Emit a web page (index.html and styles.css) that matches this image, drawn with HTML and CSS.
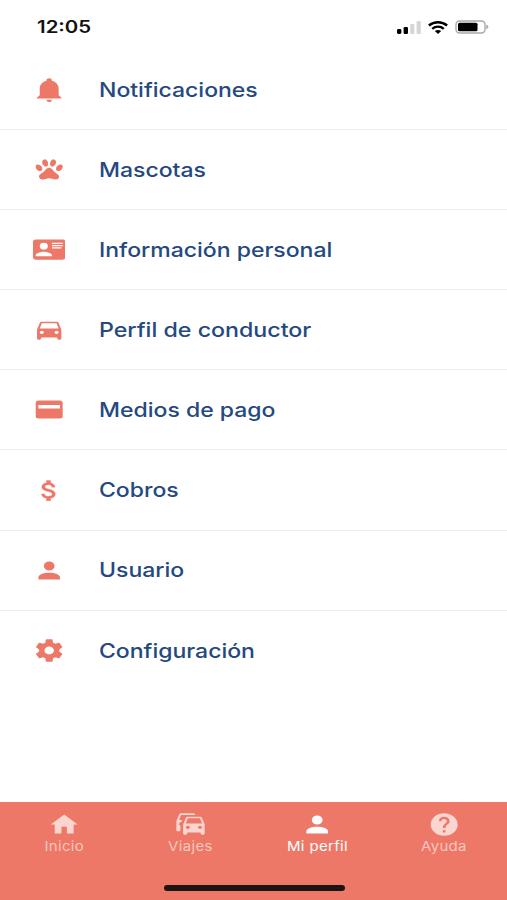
FILE: index.html
```
<!DOCTYPE html>
<html lang="es">
<head>
    <meta charset="UTF-8">
    <meta name="viewport" content="width=device-width, initial-scale=1.0">
    <title>Mi perfil</title>
    <link rel="stylesheet" href="styles.css">
</head>
<body>
    <header class="status-bar">
        <span class="time">12:05</span>
        <div class="status-icons">
            <svg class="signal" viewBox="0 0 24 13" preserveAspectRatio="none">
                <rect x="0" y="8" width="4.4" height="5" rx="1.4"/>
                <rect x="6.6" y="6" width="4.4" height="7" rx="1.2"/>
                <rect class="off" x="13.2" y="3" width="4.2" height="10" rx="1"/>
                <rect class="off" x="19.6" y="0" width="4.2" height="13" rx="1"/>
            </svg>
            <svg class="wifi" viewBox="0 0 20 13" fill="none" stroke="#000" stroke-width="2.4">
                <path d="M.9 4.5C6 .1 14 .1 19.1 4.5"/>
                <path d="M4.2 7.8C7.6 4.9 12.4 4.9 15.8 7.8"/>
                <path d="M6.8 10.1C8.7 8.5 11.3 8.5 13.2 10.1L10 13Z" fill="#000" stroke="none"/>
            </svg>
            <svg class="battery" viewBox="0 0 34 14">
                <rect x="1" y="1" width="29" height="12" rx="3.5" fill="none" stroke="#a9a9a9" stroke-width="1.4"/>
                <rect x="3" y="2.8" width="19.5" height="8.4" rx="1.5"/>
                <path d="M31.3 4.8C34 5.2 34 8.8 31.3 9.2Z" fill="#a9a9a9"/>
            </svg>
        </div>
    </header>

    <main class="menu">
        <a class="menu-item">
            <svg class="icon" viewBox="0 0 24 24" preserveAspectRatio="none"><path d="M21,19V20H3V19L5,17V11C5,7.9 7.03,5.17 10,4.29C10,4.19 10,4.1 10,4A2,2 0 0,1 12,2A2,2 0 0,1 14,4C14,4.1 14,4.19 14,4.29C16.97,5.17 19,7.9 19,11V17L21,19M14,21A2,2 0 0,1 12,23A2,2 0 0,1 10,21"/></svg>
            <span class="label">Notificaciones</span>
        </a>
        <a class="menu-item">
            <svg class="icon" viewBox="0 0 24 24" preserveAspectRatio="none"><path d="M8.35,3C9.53,2.83 10.78,4.12 11.14,5.9C11.5,7.67 10.85,9.25 9.67,9.43C8.5,9.61 7.24,8.32 6.87,6.54C6.5,4.77 7.17,3.19 8.35,3M15.5,3C16.69,3.19 17.35,4.77 17,6.54C16.62,8.32 15.37,9.61 14.19,9.43C13,9.25 12.35,7.67 12.72,5.9C13.08,4.12 14.33,2.83 15.5,3M3,7.6C4.14,7.11 5.69,8 6.5,9.55C7.26,11.13 7,12.79 5.87,13.28C4.74,13.77 3.2,12.89 2.41,11.32C1.62,9.75 1.9,8.08 3,7.6M21,7.6C22.1,8.08 22.38,9.75 21.59,11.32C20.8,12.89 19.26,13.77 18.13,13.28C17,12.79 16.74,11.13 17.5,9.55C18.31,8 19.86,7.11 21,7.6M19.33,18.38C19.37,19.32 18.65,20.36 17.79,20.75C16,21.57 13.88,19.87 11.89,19.87C9.9,19.87 7.76,21.64 6,20.75C5,20.26 4.31,18.96 4.44,17.88C4.62,16.39 6.41,15.59 7.47,14.5C8.88,13.09 9.88,10.44 11.89,10.44C13.89,10.44 14.95,13.05 16.3,14.5C17.41,15.72 19.26,16.75 19.33,18.38Z"/></svg>
            <span class="label">Mascotas</span>
        </a>
        <a class="menu-item">
            <svg class="icon" viewBox="0 0 24 24" preserveAspectRatio="none"><path d="M2,3H22C23.05,3 24,3.95 24,5V19C24,20.05 23.05,21 22,21H2C0.95,21 0,20.05 0,19V5C0,3.95 0.95,3 2,3M14,6V7H22V6H14M14,8V9H22V8H14M14,10V11H21V10H14M8,13.91C6,13.91 2,15 2,17V18H14V17C14,15 10,13.91 8,13.91M8,6A3,3 0 0,0 5,9A3,3 0 0,0 8,12A3,3 0 0,0 11,9A3,3 0 0,0 8,6Z"/></svg>
            <span class="label">Información personal</span>
        </a>
        <a class="menu-item">
            <svg class="icon" viewBox="0 0 24 24" preserveAspectRatio="none"><path d="M5,11L6.5,6.5H17.5L19,11M17.5,16A1.5,1.5 0 0,1 16,14.5A1.5,1.5 0 0,1 17.5,13A1.5,1.5 0 0,1 19,14.5A1.5,1.5 0 0,1 17.5,16M6.5,16A1.5,1.5 0 0,1 5,14.5A1.5,1.5 0 0,1 6.5,13A1.5,1.5 0 0,1 8,14.5A1.5,1.5 0 0,1 6.5,16M18.92,6C18.72,5.42 18.16,5 17.5,5H6.5C5.84,5 5.28,5.42 5.08,6L3,12V20A1,1 0 0,0 4,21H5A1,1 0 0,0 6,20V19H18V20A1,1 0 0,0 19,21H20A1,1 0 0,0 21,20V12L18.92,6Z"/></svg>
            <span class="label wide">Perfil de conductor</span>
        </a>
        <a class="menu-item">
            <svg class="icon" viewBox="0 0 24 24" preserveAspectRatio="none"><path d="M20,11H4V8H20M20,4H4C2.89,4 2,4.89 2,6V18A2,2 0 0,0 4,20H20A2,2 0 0,0 22,18V6C22,4.89 21.1,4 20,4Z"/></svg>
            <span class="label">Medios de pago</span>
        </a>
        <a class="menu-item">
            <svg class="icon dollar" viewBox="0 0 24 24" preserveAspectRatio="none"><path d="M11.8,10.9C9.53,10.31 8.8,9.7 8.8,8.75C8.8,7.66 9.81,6.9 11.5,6.9C13.28,6.9 13.94,7.75 14,9H16.21C16.14,7.28 15.09,5.7 13,5.19V3H10V5.16C8.06,5.58 6.5,6.84 6.5,8.77C6.5,11.08 8.41,12.23 11.2,12.9C13.7,13.5 14.2,14.38 14.2,15.31C14.2,16 13.71,17.1 11.5,17.1C9.44,17.1 8.63,16.18 8.5,15H6.32C6.44,17.19 8.08,18.42 10,18.83V21H13V18.85C14.95,18.5 16.5,17.35 16.5,15.3C16.5,12.46 14.07,11.5 11.8,10.9Z"/></svg>
            <span class="label">Cobros</span>
        </a>
        <a class="menu-item">
            <svg class="icon" viewBox="0 0 24 24" preserveAspectRatio="none"><path d="M12,4A4,4 0 0,1 16,8A4,4 0 0,1 12,12A4,4 0 0,1 8,8A4,4 0 0,1 12,4M12,14C16.42,14 20,15.79 20,18V20H4V18C4,15.79 7.58,14 12,14Z"/></svg>
            <span class="label">Usuario</span>
        </a>
        <a class="menu-item">
            <svg class="icon" viewBox="0 0 24 24" preserveAspectRatio="none"><path d="M12,15.5A3.5,3.5 0 0,1 8.5,12A3.5,3.5 0 0,1 12,8.5A3.5,3.5 0 0,1 15.5,12A3.5,3.5 0 0,1 12,15.5M19.43,12.97C19.47,12.65 19.5,12.33 19.5,12C19.5,11.67 19.47,11.34 19.43,11L21.54,9.37C21.73,9.22 21.78,8.95 21.66,8.73L19.66,5.27C19.54,5.05 19.27,4.96 19.05,5.05L16.56,6.05C16.04,5.66 15.5,5.32 14.87,5.07L14.5,2.42C14.46,2.18 14.25,2 14,2H10C9.75,2 9.54,2.18 9.5,2.42L9.13,5.07C8.5,5.32 7.96,5.66 7.44,6.05L4.95,5.05C4.73,4.96 4.46,5.05 4.34,5.27L2.34,8.73C2.21,8.95 2.27,9.22 2.46,9.37L4.57,11C4.53,11.34 4.5,11.67 4.5,12C4.5,12.33 4.53,12.65 4.57,12.97L2.46,14.63C2.27,14.78 2.21,15.05 2.34,15.27L4.34,18.73C4.46,18.95 4.73,19.03 4.95,18.95L7.44,17.94C7.96,18.34 8.5,18.68 9.13,18.93L9.5,21.58C9.54,21.82 9.75,22 10,22H14C14.25,22 14.46,21.82 14.5,21.58L14.87,18.93C15.5,18.67 16.04,18.34 16.56,17.94L19.05,18.95C19.27,19.03 19.54,18.95 19.66,18.73L21.66,15.27C21.78,15.05 21.73,14.78 21.54,14.63L19.43,12.97Z"/></svg>
            <span class="label">Configuración</span>
        </a>
    </main>

    <nav class="tab-bar">
        <div class="tabs">
            <a class="tab">
                <svg class="icon" viewBox="0 0 24 24" preserveAspectRatio="none"><path d="M10,20V14H14V20H19V12H22L12,3L2,12H5V20H10Z"/></svg>
                <span class="tab-label">Inicio</span>
            </a>
            <a class="tab">
                <svg class="icon" viewBox="0 0 24 24" preserveAspectRatio="none"><path d="M8,11L9.5,6.5H18.5L20,11M18.5,16A1.5,1.5 0 0,1 17,14.5A1.5,1.5 0 0,1 18.5,13A1.5,1.5 0 0,1 20,14.5A1.5,1.5 0 0,1 18.5,16M9.5,16A1.5,1.5 0 0,1 8,14.5A1.5,1.5 0 0,1 9.5,13A1.5,1.5 0 0,1 11,14.5A1.5,1.5 0 0,1 9.5,16M19.92,6C19.71,5.4 19.14,5 18.5,5H9.5C8.86,5 8.29,5.4 8.08,6L6,12V20A1,1 0 0,0 7,21H8A1,1 0 0,0 9,20V19H19V20A1,1 0 0,0 20,21H21A1,1 0 0,0 22,20V12L19.92,6M14.92,3C14.71,2.4 14.14,2 13.5,2H4.5C3.86,2 3.29,2.4 3.08,3L1,9V17A1,1 0 0,0 2,18H3A1,1 0 0,0 4,17V12.91C3.22,12.63 2.82,11.77 3.1,11C3.32,10.4 3.87,10 4.5,10H4.57L5.27,8H3L4.5,3.5H15.09L14.92,3Z"/></svg>
                <span class="tab-label">Viajes</span>
            </a>
            <a class="tab active">
                <svg class="icon" viewBox="0 0 24 24" preserveAspectRatio="none"><path d="M12,4A4,4 0 0,1 16,8A4,4 0 0,1 12,12A4,4 0 0,1 8,8A4,4 0 0,1 12,4M12,14C16.42,14 20,15.79 20,18V20H4V18C4,15.79 7.58,14 12,14Z"/></svg>
                <span class="tab-label">Mi perfil</span>
            </a>
            <a class="tab">
                <svg class="icon" viewBox="0 0 24 24" preserveAspectRatio="none"><path d="M15.07,11.25L14.17,12.17C13.45,12.89 13,13.5 13,15H11V14.5C11,13.39 11.45,12.39 12.17,11.67L13.41,10.41C13.78,10.05 14,9.55 14,9C14,7.89 13.1,7 12,7A2,2 0 0,0 10,9H8A4,4 0 0,1 12,5A4,4 0 0,1 16,9C16,9.88 15.64,10.67 15.07,11.25M13,19H11V17H13M12,2A10,10 0 0,0 2,12A10,10 0 0,0 12,22A10,10 0 0,0 22,12C22,6.47 17.5,2 12,2Z"/></svg>
                <span class="tab-label">Ayuda</span>
            </a>
        </div>
        <div class="home-indicator"></div>
    </nav>
</body>
</html>
```
FILE: styles.css
```
* {
    margin: 0;
    padding: 0;
    box-sizing: border-box;
}

body {
    height: 100vh;
    display: flex;
    flex-direction: column;
    overflow: hidden;
    background-color: #fff;
    font-family: Inter, "Liberation Sans", sans-serif;
}

.status-bar {
    height: 50px;
    padding: 4px 18px 0 37px;
    display: flex;
    justify-content: space-between;
    align-items: center;
}

.time {
    font-size: 17px;
    font-weight: 600;
    color: #111;
    transform: scaleX(1.2);
    transform-origin: left;
}

.status-icons {
    display: flex;
    align-items: center;
    gap: 7px;
}

.signal {
    width: 24px;
    height: 13px;
}

.signal .off {
    fill: #d6d6d6;
}

.wifi {
    width: 20px;
    height: 13px;
}

.battery {
    width: 34px;
    height: 14px;
}

.menu {
    flex: 1;
}

.menu-item {
    height: 80.1px;
    padding-left: 33px;
    display: flex;
    align-items: center;
    border-bottom: 1px solid #ececee;
}

.menu-item:last-child {
    border-bottom: none;
}

.icon {
    width: 32.4px;
    height: 27px;
    fill: #ed7868;
}

.icon.dollar {
    stroke: #ed7868;
    stroke-width: 0.3;
}

.label {
    margin-left: 33.5px;
    font-size: 20px;
    font-weight: 500;
    color: #25497f;
    transform: scaleX(1.15);
    transform-origin: left;
}

.label.wide {
    transform: scaleX(1.16);
}

.tab-bar {
    height: 98px;
    padding-bottom: 9px;
    display: flex;
    flex-direction: column;
    justify-content: space-between;
    align-items: center;
    background-color: #ed7868;
}

.tabs {
    width: 100%;
    padding: 9px 0 0 1px;
    display: flex;
}

.tab {
    flex: 1;
    display: flex;
    flex-direction: column;
    align-items: center;
    color: #fac6bd;
}

.tab .icon {
    fill: #fbd5cf;
}

.tab-label {
    font-size: 13px;
    line-height: 17px;
    letter-spacing: 0.3px;
    transform: scaleX(1.15);
}

.tab.active {
    color: #fff;
}

.tab.active .icon {
    fill: #fff;
}

.home-indicator {
    width: 181px;
    height: 6px;
    margin-left: 1px;
    border-radius: 3px;
    background-color: #1c1514;
}
```
